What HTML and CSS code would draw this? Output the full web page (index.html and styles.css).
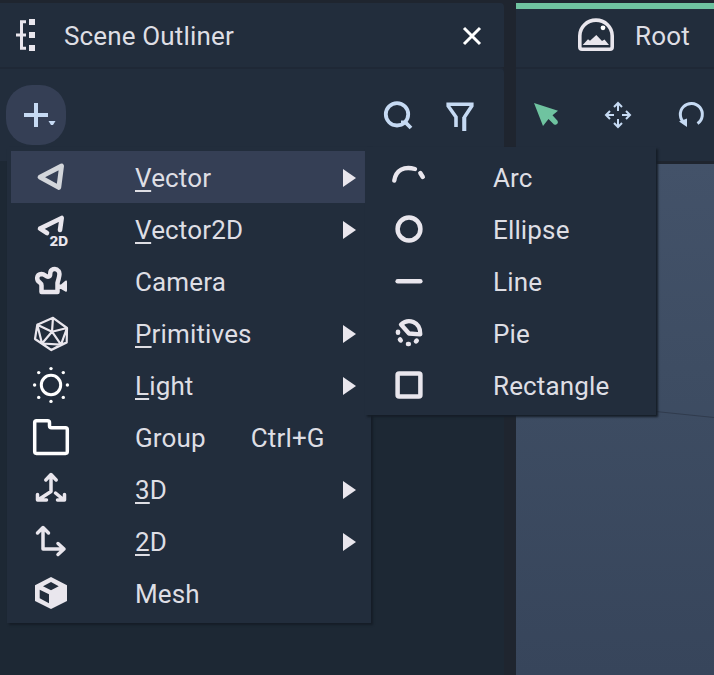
FILE: index.html
```html
<!DOCTYPE html>
<html lang="en">
<head>
<meta charset="utf-8">
<title>Scene Outliner</title>
<link rel="stylesheet" href="styles.css">
</head>
<body>
<div class="app">
  <section class="outliner">
    <header class="tab">
      <svg class="tab-icon" viewBox="0 0 36 36" width="36" height="36"><path d="M18 3.700h-4.500v26.600H18M8 17h10" stroke="#e9e6ed" stroke-width="3" fill="none"/><path d="M21 1h6v6h-6zM21 14h6v6h-6zM21 27h6v6h-6z" fill="#e9e6ed"/></svg>
      <h1 class="title">Scene Outliner</h1>
      <svg class="close" viewBox="0 0 20 20" width="20" height="20"><path d="M2 2l16 16M18 2L2 18" stroke="#fff" stroke-width="3" fill="none"/></svg>
    </header>
    <div class="toolbar">
      <button class="add" aria-label="Add"><svg viewBox="0 0 60 60" width="60" height="60"><path d="M18 30h24M30 18v24" stroke="#c6daf3" stroke-width="4"/><path d="M42.500 36h7l-2.500 4h-2z" fill="#c6daf3"/></svg></button>
      <span class="spacer"></span>
      <svg class="tool" viewBox="0 0 36 36" width="36" height="36"><g fill="none" stroke="#c6daf3" stroke-width="3.800"><circle cx="17" cy="17.300" r="11.200"/><path d="M21 25.500h4.500l5.500 5.500" /></g></svg>
      <svg class="tool filter" viewBox="0 0 36 36" width="36" height="36"><path d="M14 30V20L6.200 9V7.300h23.600V9L22.500 20v14M22 20v14" fill="none" stroke="#c6daf3" stroke-width="3.600"/></svg>
    </div>
    <div class="tree"></div>
  </section>
  <section class="view">
    <header class="tab view-tab">
      <svg class="root-icon" viewBox="0 0 36 34" width="36" height="34"><path d="M4 31.300q-2.200 0-2.200-2.200V17.800a16.200 15.700 0 0 1 32.400 0v11.300q0 2.200-2.200 2.200z" fill="none" stroke="#e9e6ed" stroke-width="3.600"/><path d="M4.700 27l5.300-5.700 2 1.500 6.300-5.800 5.700 6 2.500-1.500 4.500 5.500z" fill="#e9e6ed"/><circle cx="25" cy="9.800" r="2.400" fill="#fff"/></svg>
      <h2 class="title">Root</h2>
    </header>
    <div class="tools">
      <svg viewBox="0 0 36 36" width="36" height="36"><path d="M6 6l24 7.700-5.500 4.500 5 5.500q1.200 2.500-1.200 3.700-2 .800-3.300-1l-4.500-4.500L15 29z" fill="#6fc3a0"/></svg>
      <svg viewBox="0 0 36 36" width="36" height="36"><g fill="none" stroke="#c6daf3" stroke-width="2"><path d="M18 14V6M14 10l4-4 4 4M18 22v8M14 26l4 4 4-4M14 18H6M10 14l-4 4 4 4M22 18h8M26 14l4 4-4 4"/></g></svg>
      <svg viewBox="0 0 36 36" width="36" height="36"><path d="M12.500 26a11 11 0 1 1 13 .500" fill="none" stroke="#c6daf3" stroke-width="3"/><path d="M7 24.500l8-3v8.500z" fill="#c6daf3"/></svg>
    </div>
    <div class="viewport"><svg viewBox="0 0 198 511" width="198" height="511"><path d="M130 246.500L198 253.500" stroke="#303b4d"/></svg></div>
  </section>
</div>

<nav class="menu main-menu">
  <div class="item active"><svg viewBox="0 0 36 36"><path d="M7 18.200L28.600 7l-2.800 21.500z" stroke-width="4.800"/></svg><span><u>V</u>ector</span><i class="arrow"></i></div>
  <div class="item"><svg viewBox="0 0 36 36"><path d="M14 22L7 17.600 28.700 7 27 19" stroke-width="4.600"/><text class="badge" x="16.500" y="34.500" textLength="18.500" lengthAdjust="spacingAndGlyphs">2D</text></svg><span><u>V</u>ector2D</span><i class="arrow"></i></div>
  <div class="item"><svg viewBox="0 0 36 36"><path d="M8.500 29H24.500V20C25.500 15 28 11 25.500 8c-3-4-8.200-1.500-8.200 2 0 2.200-.800 3.700-2.300 3.700-2.500 0-3-2.700-6.500-2.700-5.300.500-5.500 6-1.800 8.300 1.400 1 1.800 1.700 1.800 3.200z" stroke-width="4.500"/><path class="solid" d="M26 21.500h2l4.300-3.800q1.700-.800 1.700 1v8.800q0 1.700-1.700 1L28 26h-2z"/></svg><span>Camera</span></div>
  <div class="item"><svg viewBox="0 0 36 36"><path d="M20 2.800l14 10.200-.300 14.500L18.300 35 2 24 4.300 9.700zM19 16.700l1-13.900M19 16.700L34 13M19 16.700L4.300 9.700M19 16.700l9 12.900M19 16.700L9 28.500M28 29.600L9 28.500 4.300 9.700M28 29.600L34 13M28 29.600l-9.700 5.400M28 29.600l5.700-2.100" stroke-width="2.200"/></svg><span><u>P</u>rimitives</span><i class="arrow"></i></div>
  <div class="item white"><svg viewBox="0 0 36 36"><circle cx="18" cy="18" r="9.700" stroke-width="3"/><g class="solid"><circle cx="18" cy="1.600" r="1.700"/><circle cx="18" cy="34.400" r="1.700"/><circle cx="1.600" cy="18" r="1.700"/><circle cx="34.400" cy="18" r="1.700"/><circle cx="5.700" cy="5.600" r="1.700"/><circle cx="30.300" cy="5.600" r="1.700"/><circle cx="5.700" cy="30.400" r="1.700"/><circle cx="30.300" cy="30.400" r="1.700"/></g></svg><span><u>L</u>ight</span><i class="arrow"></i></div>
  <div class="item white"><svg viewBox="0 0 36 36"><path d="M3.500 1.700h11q2 0 2 2v3q0 2 2 2h14q1.800 0 1.800 1.900v22q0 1.800-1.800 1.800h-29q-1.800 0-1.800-1.800V3.500q0-1.800 1.800-1.800z" stroke-width="3.500"/></svg><span>Group</span><kbd>Ctrl+G</kbd></div>
  <div class="item"><svg viewBox="0 0 36 36"><path d="M12.800 9L18 3.500 23.200 9M18 4v16.500L5 29M4.500 23.500V29h9M22.500 22L31 29M31.500 23.500V29h-7" stroke-width="3.500"/></svg><span><u>3</u>D</span><i class="arrow"></i></div>
  <div class="item"><svg viewBox="0 0 36 36"><path d="M4.500 10L10 4.500l5.500 5.500M10 5v21h21M25 20.500l6 5.500-6 5.500" stroke-width="3.500"/></svg><span><u>2</u>D</span><i class="arrow"></i></div>
  <div class="item"><svg viewBox="0 0 36 36"><path class="solid" fill-rule="evenodd" d="M18 2l16 8.300V26l-16 8L2 26V10.300zM18 7l-8 4.300 8 4 7.700-4zM6.700 14.700v8.600l9.300 5v-9z"/></svg><span>Mesh</span></div>
</nav>

<nav class="menu sub-menu">
  <div class="item"><svg viewBox="0 0 36 36"><path d="M3.300 21.500C5 11 13 7 24 10M29.300 14l2.500 4" stroke-width="4.400"/></svg><span>Arc</span></div>
  <div class="item"><svg viewBox="0 0 36 36"><circle cx="18" cy="18" r="11.400" stroke-width="4.500"/></svg><span>Ellipse</span></div>
  <div class="item"><svg viewBox="0 0 36 36"><path d="M6.700 18.200h22.600" stroke-width="4.600"/></svg><span>Line</span></div>
  <div class="item"><svg viewBox="0 0 36 36"><path d="M10 9.500C17 3 29.500 6 29.300 19.300L18 18.500z" stroke-width="4.300"/><path d="M7 16.800v1M9 24.500l.700.900M17 29h.800M25 26.400l.700-.700" stroke-width="4.600"/></svg><span>Pie</span></div>
  <div class="item"><svg viewBox="0 0 36 36"><rect x="6.600" y="6.600" width="22.800" height="22.800" rx="1.500" stroke-width="4.500"/></svg><span>Rectangle</span></div>
</nav>
</body>
</html>
```

FILE: styles.css
```css
* { box-sizing: border-box; }
body {
  margin: 0;
  width: 714px;
  height: 675px;
  overflow: hidden;
  background: #1f252f;
  color: #dedee4;
  font: 400 26px/52px Roboto, "Liberation Sans", sans-serif;
  letter-spacing: 0.15px;
}
svg { display: block; flex: none; }
.app { display: flex; gap: 12px; height: 675px; padding-top: 3px; }
.outliner { width: 504px; display: flex; flex-direction: column; }
.view { width: 198px; display: flex; flex-direction: column; }
.tab {
  display: flex;
  align-items: center;
  height: 64px;
  padding: 1px 22px 0 8px;
  background: #222d3c;
  border-radius: 0 4px 0 0;
}
.title { margin: 0; padding-top: 1px; font-size: 26px; font-weight: 400; }
.tab-icon { margin-right: 20px; }
.close { margin-left: auto; }
.toolbar {
  display: flex;
  align-items: center;
  height: 92px;
  margin-top: 2px;
  padding: 0 26px 0 6px;
  background: #222d3c;
  border-radius: 0 4px 0 0;
  box-shadow: 0 -2px #1f2836;
}
.add { width: 60px; height: 60px; padding: 0; border: 0; border-radius: 26px; background: #353f55; }
.spacer { flex: 1; }
.filter { margin-left: 26px; }
.tree { flex: 1; background: #1d2834; }
.view-tab { padding: 0 0 0 62px; border-top: 6px solid #6fc3a0; border-radius: 0; }
.root-icon { margin: -7px 21px 0 0; }
.view-tab .title { margin-top: -5px; }
.tools {
  display: flex;
  align-items: center;
  gap: 36px;
  height: 92px;
  margin-top: 2px;
  padding-left: 12px;
  background: #222d3c;
  box-shadow: 0 -2px #1f2836;
}
.viewport {
  flex: 1;
  margin-top: 3px;
  background: linear-gradient(#435269, #3e4d63 40%, #37455b);
}
.menu { position: absolute; background: #222d3c; box-shadow: 2px 2px 2px #151d27; }
.main-menu { left: 7px; top: 147px; width: 364px; height: 476px; padding: 4px 6px 4px 4px; }
.sub-menu { left: 365px; top: 147px; width: 291px; height: 268px; padding: 4px; }
.item { display: flex; align-items: center; height: 52px; padding: 0 10px 0 22px; }
.item span, .item kbd { padding-top: 2px; }
.item svg {
  width: 36px;
  height: 36px;
  margin-right: 66px;
  overflow: visible;
  fill: none;
  stroke: #e9e6ed;
  stroke-linecap: round;
  stroke-linejoin: round;
}
.item .solid { fill: #e9e6ed; stroke: none; }
.item .badge { fill: #e9e6ed; stroke: none; font: 800 13px Inter, sans-serif; letter-spacing: 0; }
.item.white svg { stroke: #fff; }
.item.white .solid { fill: #fff; }
.active { background: #353f55; }
.active svg { stroke: #d3d6db; }
.item u { text-decoration-thickness: 2px; text-underline-offset: 3px; text-decoration-skip-ink: none; }
.arrow {
  width: 13px;
  height: 18px;
  margin: 2px -1px 0 auto;
  background: #e9e6ed;
  clip-path: polygon(0 0, 100% 50%, 0 100%);
}
.item kbd { margin-left: 45px; font: inherit; }
```
